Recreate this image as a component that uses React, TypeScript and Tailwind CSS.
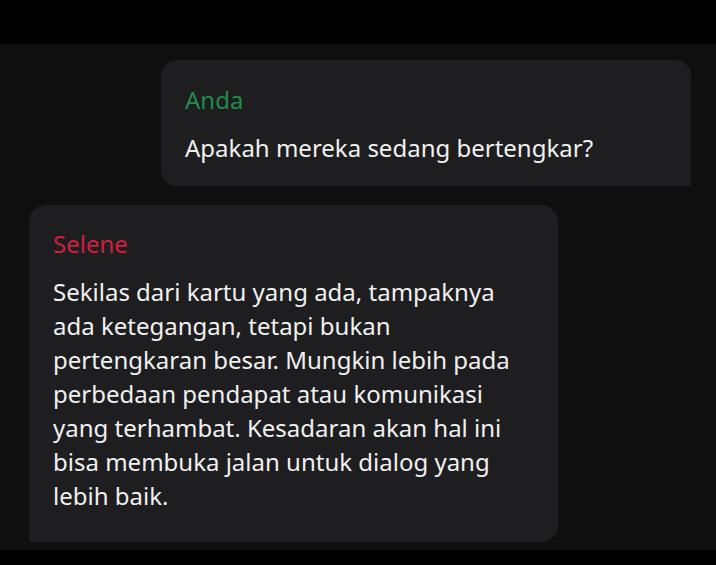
import React from 'react';

const messages = [
  {
    sender: 'Anda',
    mine: true,
    text: 'Apakah mereka sedang bertengkar?',
  },
  {
    sender: 'Selene',
    mine: false,
    text:
      'Sekilas dari kartu yang ada, tampaknya\nada ketegangan, tetapi bukan\npertengkaran besar. Mungkin lebih pada\nperbedaan pendapat atau komunikasi\nyang terhambat. Kesadaran akan hal ini\nbisa membuka jalan untuk dialog yang\nlebih baik.',
  },
];

export default function App() {
  return (
    <div className="h-[565px] w-full flex flex-col bg-black overflow-hidden font-['Noto_Sans',sans-serif]">
      <div className="h-[44px] shrink-0 bg-black" />

      <main className="flex-1 bg-[#0f0f0f] pt-4 flex flex-col gap-[19px] overflow-hidden">
        {messages.map((m, i) => (
          <div
            key={i}
            className={
              m.mine
                ? 'ml-auto mr-[25px] w-[530px] rounded-2xl rounded-br-none bg-[#1e1e20] px-6 pt-[23px] pb-[21px]'
                : 'ml-[29px] w-[529px] rounded-2xl rounded-bl-none bg-[#1e1e20] px-6 pt-[22px] pb-[29px]'
            }
          >
            <p
              className={`text-[24px] leading-[34px] ${
                m.mine ? 'text-[#1f8c4c]' : 'text-[#d01e40]'
              }`}
            >
              {m.sender}
            </p>
            <p className="mt-[14px] text-[24px] leading-[34px] text-[#f0f0f0] whitespace-pre-line">
              {m.text}
            </p>
          </div>
        ))}
      </main>

      <div className="h-[15px] shrink-0 bg-black" />
    </div>
  );
}
